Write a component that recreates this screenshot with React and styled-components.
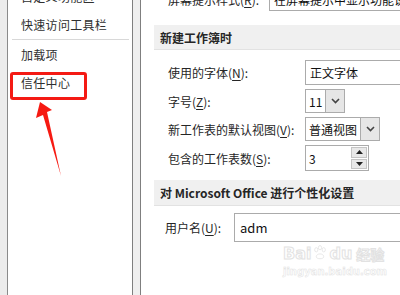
import { createGlobalStyle, styled } from "styled-components";

const Global = createGlobalStyle`
  html, body { margin: 0; padding: 0; background: #fff; }
  body { font-family: "Noto Sans CJK SC", "Noto Sans", sans-serif; font-size: 12px; color: #262626; }
`;

function App() {
  return (
    <Root>
      <Global />
      <Strip />
      <Sidebar>
        <NavList>
          <NavItem>自定义功能区</NavItem>
          <NavItem>快速访问工具栏</NavItem>
          <NavDivider />
          <NavItem>加载项</NavItem>
          <NavItem>信任中心</NavItem>
        </NavList>
      </Sidebar>
      <Splitter />
      <Content>
        <FormRow $label={101} $h={24}>
          <Label>屏幕提示样式(<u>R</u>):</Label>
          <TextBox>在屏幕提示中显示功能说明</TextBox>
        </FormRow>

        <SectionHeader $top={14} $h={25}>新建工作簿时</SectionHeader>

        <Rows>
          <FormRow $label={137} $h={25}>
            <Label>使用的字体(<u>N</u>):</Label>
            <TextBox>正文字体</TextBox>
          </FormRow>
          <FormRow $label={137} $h={24}>
            <Label>字号(<u>Z</u>):</Label>
            <Select $w={40}>
              <SelectValue>11</SelectValue>
              <DropButton><Chevron /></DropButton>
            </Select>
          </FormRow>
          <FormRow $label={137} $h={24}>
            <Label>新工作表的默认视图(<u>V</u>):</Label>
            <Select $w={75}>
              <SelectValue>普通视图</SelectValue>
              <DropButton><Chevron /></DropButton>
            </Select>
          </FormRow>
          <FormRow $label={137} $h={26}>
            <Label>包含的工作表数(<u>S</u>):</Label>
            <Spin>
              <SelectValue>3</SelectValue>
              <SpinButtons>
                <SpinBtn>
                  <svg width="7" height="4" viewBox="0 0 7 4"><path d="M0 4 L3.5 0 L7 4 Z" fill="#222" /></svg>
                </SpinBtn>
                <SpinBtn>
                  <svg width="7" height="4" viewBox="0 0 7 4"><path d="M0 0 L3.5 4 L7 0 Z" fill="#222" /></svg>
                </SpinBtn>
              </SpinButtons>
            </Spin>
          </FormRow>
        </Rows>

        <SectionHeader $top={9} $h={26}>对 Microsoft Office 进行个性化设置</SectionHeader>

        <FormRow $label={69} $h={29} $indent={11} style={{ marginTop: 7 }}>
          <Label>用户名(<u>U</u>):</Label>
          <TextBox $big>adm</TextBox>
        </FormRow>
      </Content>

      <Watermark>
        <WmTop>
          <WmWord>Bai</WmWord>
          <Paw viewBox="0 0 30 30">
            <ellipse cx="8" cy="9" rx="3" ry="4" />
            <ellipse cx="15" cy="5" rx="3" ry="4" />
            <ellipse cx="22" cy="9" rx="3" ry="4" />
            <path d="M8 22 C8 15 22 15 22 22 C22 27 8 27 8 22 Z" />
          </Paw>
          <WmWord>du</WmWord>
          <WmCn>经验</WmCn>
        </WmTop>
        <WmUrl>jingyan.baidu.com</WmUrl>
      </Watermark>

      <Highlight />
      <Arrow viewBox="0 0 400 295">
        <polygon points="40,102 52,110 47,112 61,176 43,115 36,118" fill="#f61a12" />
      </Arrow>
    </Root>
  );
}

function Chevron() {
  return (
    <svg width="9" height="6" viewBox="0 0 9 6">
      <path d="M1 1 L4.5 4.5 L8 1" stroke="#444" strokeWidth="1.6" fill="none" />
    </svg>
  );
}

const Root = styled.div`
  position: relative;
  width: 400px;
  height: 295px;
  overflow: hidden;
  display: flex;
  background: #fff;
`;

const Strip = styled.div`
  width: 7px;
  flex: none;
  background: #ececec;
  border-right: 1px solid #8a8a8a;
`;

const Sidebar = styled.div`
  width: 124px;
  flex: none;
  background: #fff;
  border-right: 1px solid #7f7f7f;
`;

const NavList = styled.div`
  margin-top: -17px;
  display: flex;
  flex-direction: column;
`;

const NavItem = styled.div`
  height: 28px;
  line-height: 28px;
  padding-left: 13px;
  font-size: 12px;
  letter-spacing: 0.3px;
  color: #303030;
  white-space: nowrap;
`;

const NavDivider = styled.div`
  height: 1px;
  margin: 0 3px 1px 4px;
  background: #d8d8d8;
`;

const Splitter = styled.div`
  width: 7px;
  flex: none;
  background: #efefef;
  border-right: 1px solid #7f7f7f;
`;

const Content = styled.div`
  flex: 1;
  min-width: 0;
  margin-top: -13px;
  padding-left: 13px;
  display: flex;
  flex-direction: column;
`;

const Rows = styled.div`
  margin-top: 10px;
  display: flex;
  flex-direction: column;
  gap: 4px;
`;

const FormRow = styled.div`
  display: grid;
  grid-template-columns: ${(p) => p.$label}px 1fr;
  align-items: center;
  height: ${(p) => p.$h}px;
  padding-left: ${(p) => p.$indent ?? 14}px;

  & > *:last-child {
    height: 100%;
  }
`;

const Label = styled.div`
  white-space: nowrap;
  color: #262626;
  u { text-underline-offset: 2px; }
`;

const TextBox = styled.div`
  box-sizing: border-box;
  width: 200px;
  border: 1px solid #ababab;
  padding-left: ${(p) => (p.$big ? 5 : 4)}px;
  display: flex;
  align-items: center;
  font-size: ${(p) => (p.$big ? 13 : 12)}px;
  color: #111;
  white-space: nowrap;
  overflow: hidden;
`;

const Select = styled.div`
  box-sizing: border-box;
  width: ${(p) => p.$w}px;
  border: 1px solid #ababab;
  display: flex;
`;

const SelectValue = styled.div`
  flex: 1;
  display: flex;
  align-items: center;
  padding-left: 3px;
  font-size: 12px;
  color: #111;
  white-space: nowrap;
`;

const DropButton = styled.div`
  width: 18px;
  flex: none;
  border-left: 1px solid #ababab;
  background: #e6e6e6;
  display: flex;
  align-items: center;
  justify-content: center;
`;

const Spin = styled.div`
  box-sizing: border-box;
  width: 64px;
  border: 1px solid #ababab;
  display: flex;
`;

const SpinButtons = styled.div`
  width: 16px;
  padding: 1px 1px 1px 0;
  display: flex;
  flex-direction: column;
  gap: 1px;
`;

const SpinBtn = styled.div`
  flex: 1;
  background: #e8e8e8;
  border: 1px solid #c4c4c4;
  display: flex;
  align-items: center;
  justify-content: center;
`;

const SectionHeader = styled.div`
  margin-top: ${(p) => p.$top}px;
  height: ${(p) => p.$h}px;
  box-sizing: border-box;
  padding-left: 6px;
  display: flex;
  align-items: center;
  background: #f0f0f0;
  border-bottom: 1px solid #e2e2e2;
  font-weight: bold;
  font-size: 12px;
  color: #262626;
  white-space: nowrap;
`;

const Highlight = styled.div`
  position: absolute;
  left: 10px;
  top: 72px;
  width: 77px;
  height: 28px;
  box-sizing: border-box;
  border: 3px solid #f41a14;
  border-radius: 3px;
`;

const Arrow = styled.svg`
  position: absolute;
  left: 0;
  top: 0;
  width: 400px;
  height: 295px;
  pointer-events: none;
`;

const Watermark = styled.div`
  position: absolute;
  left: 283px;
  top: 243px;
  display: flex;
  flex-direction: column;
  align-items: flex-start;
  color: #fff;
  -webkit-text-stroke: 1px #e2e2e2;
  pointer-events: none;
`;

const WmTop = styled.div`
  display: flex;
  align-items: flex-end;
  height: 20px;
`;

const WmWord = styled.span`
  font-family: "DejaVu Sans", sans-serif;
  font-weight: bold;
  font-size: 16px;
  line-height: 18px;
`;

const WmCn = styled.span`
  margin-left: 4px;
  font-size: 14px;
  line-height: 18px;
  font-weight: bold;
`;

const Paw = styled.svg`
  width: 16px;
  height: 16px;
  margin: 0 1px 2px;
  fill: #fff;
  stroke: #e2e2e2;
  stroke-width: 1.5;
`;

const WmUrl = styled.div`
  margin-top: 3px;
  font-family: "DejaVu Sans", sans-serif;
  font-size: 10px;
  font-weight: bold;
  -webkit-text-stroke: 0.5px #e2e2e2;
`;

export default App;
